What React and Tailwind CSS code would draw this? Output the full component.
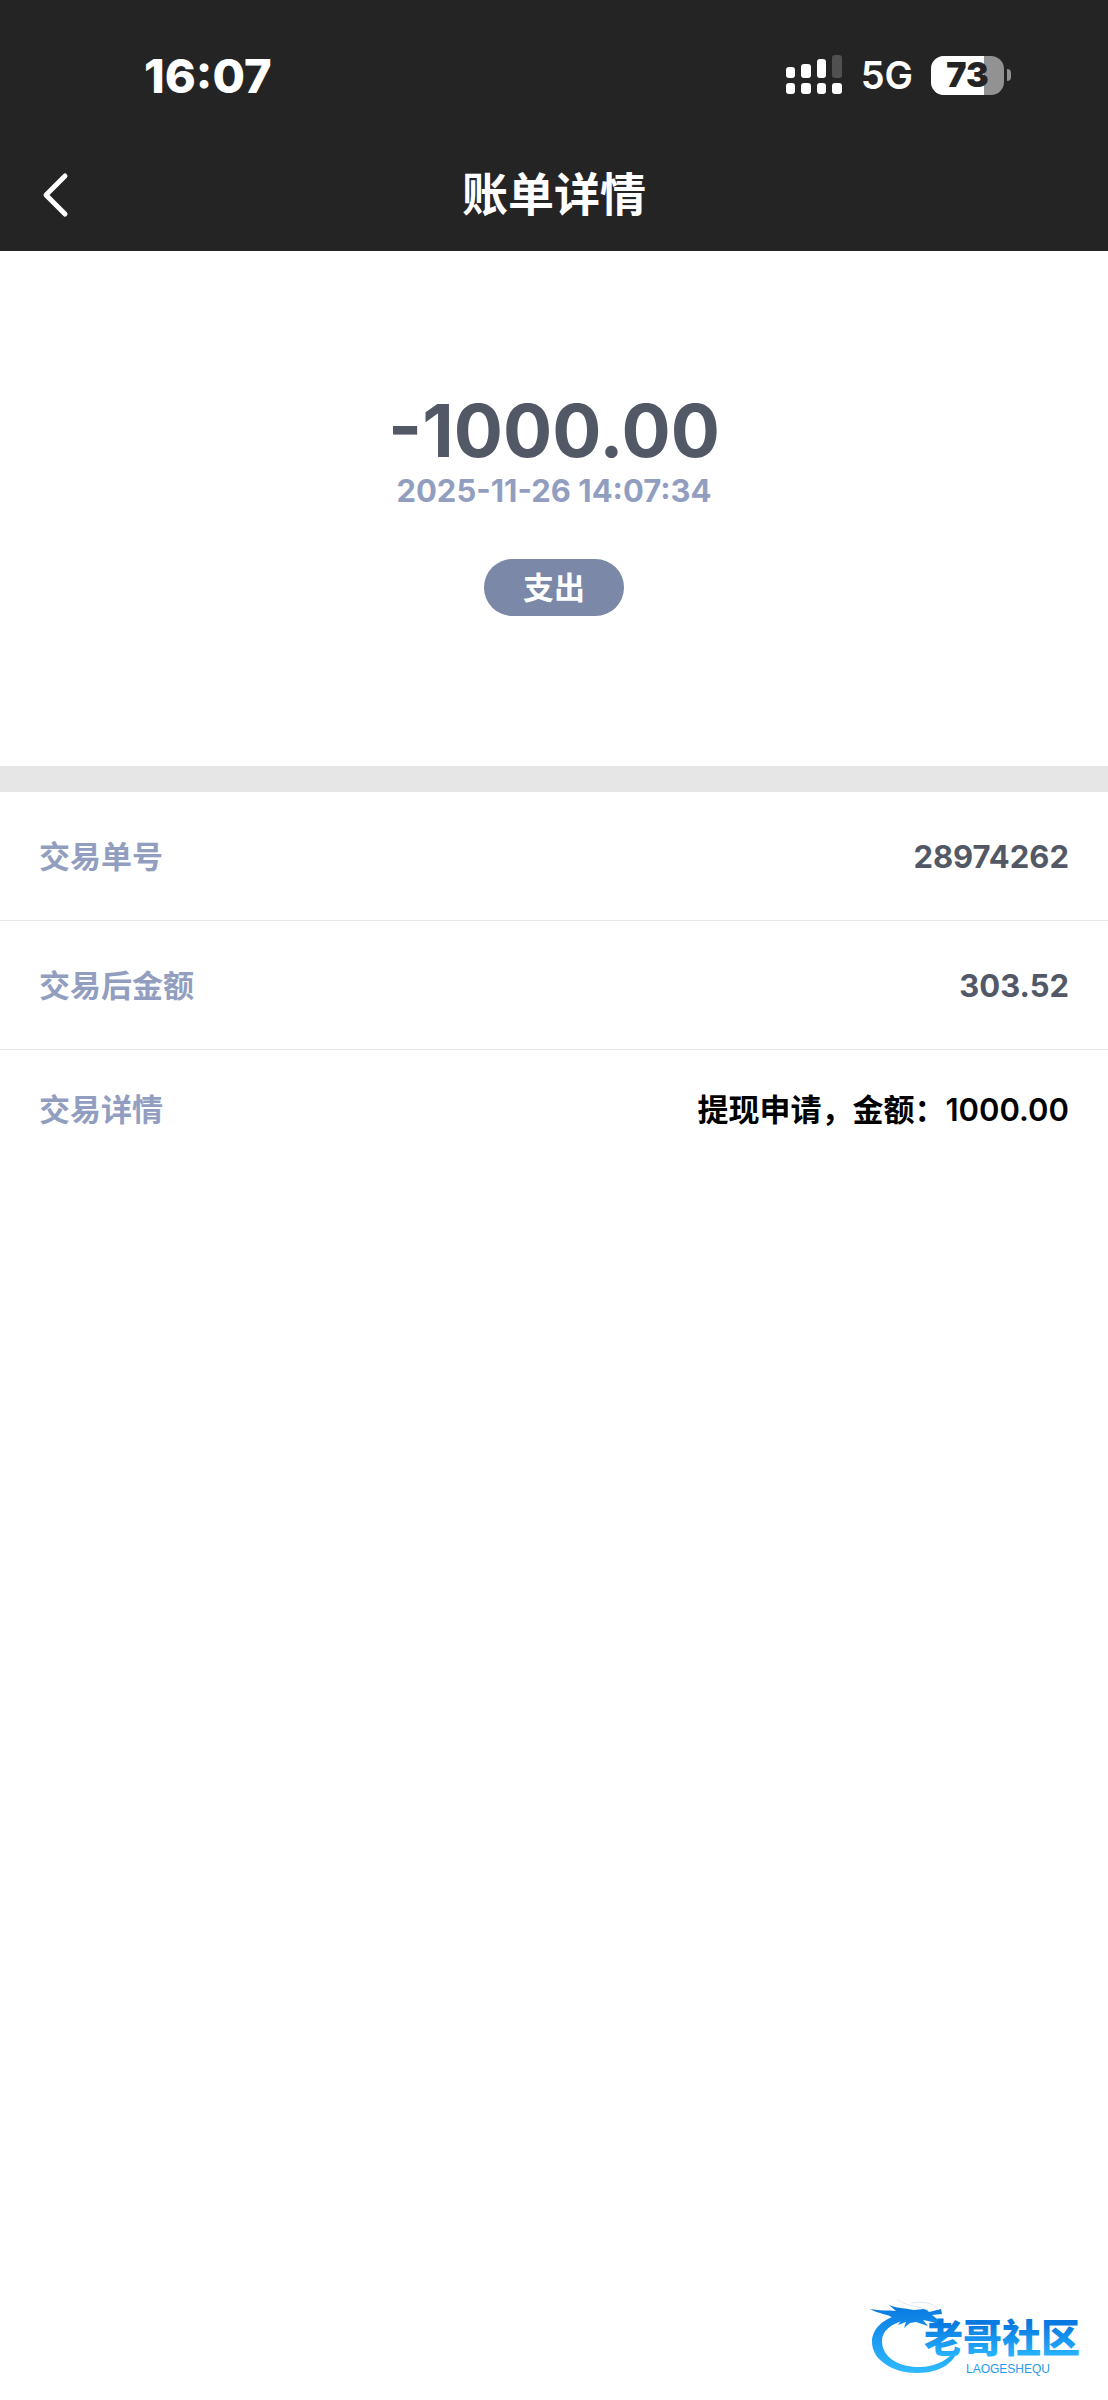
const detalhes = [
  { label: '交易单号', value: '28974262' },
  { label: '交易后金额', value: '303.52' },
]

function SignalIcon() {
  return (
    <svg width="58" height="40" viewBox="0 0 58 40" fill="#fff" aria-hidden="true">
      <rect x="1" y="12" width="9" height="11" rx="3" />
      <rect x="16" y="9" width="10" height="14" rx="3" />
      <rect x="32" y="4" width="9" height="19" rx="3" />
      <rect x="47" y="0" width="10" height="23" rx="3" fill="#505050" />
      <rect x="1" y="28" width="9" height="11" rx="3" />
      <rect x="16" y="28" width="10" height="11" rx="3" />
      <rect x="32" y="28" width="9" height="11" rx="3" />
      <rect x="47" y="28" width="10" height="11" rx="3" />
    </svg>
  )
}

function Battery({ level }) {
  return (
    <div className="flex items-center gap-[3px]">
      <div className="relative flex h-[39px] w-[73px] items-center justify-center overflow-hidden rounded-[13px] bg-[#929292]">
        <div className="absolute inset-y-0 left-0 bg-white" style={{ width: `${level}%` }} />
        <span className="relative text-[34px] leading-none font-black text-[#242424]">
          {level}
        </span>
      </div>
      <div className="h-3 w-1 rounded-r-full bg-[#929292]" />
    </div>
  )
}

function StatusBar() {
  return (
    <div className="flex h-[150px] items-center justify-between pr-[97px] pl-[144px]">
      <span className="text-[47px] leading-none font-extrabold">16:07</span>
      <div className="flex items-center gap-[18px]">
        <SignalIcon />
        <span className="text-[38px] leading-none font-semibold">5G</span>
        <Battery level={73} />
      </div>
    </div>
  )
}

function CommunityLogo() {
  return (
    <svg width="224" height="84" viewBox="0 0 224 84" role="img" aria-label="老哥社区">
      <defs>
        <linearGradient id="ring" gradientUnits="userSpaceOnUse" x1="0" y1="12" x2="0" y2="74">
          <stop offset="0" stopColor="#0a7be2" />
          <stop offset="1" stopColor="#2db8ff" />
        </linearGradient>
        <linearGradient id="word" gradientUnits="userSpaceOnUse" x1="0" y1="28" x2="0" y2="60">
          <stop offset="0" stopColor="#0879e0" />
          <stop offset="1" stopColor="#28b4ff" />
        </linearGradient>
      </defs>
      {/* dragon body */}
      <path
        d="M34 18C15 22 4 33 4 46C4 64 25 77 49 77C73 77 88 66 90 51C82 63 69 71 51 71C30 71 14 61 14 45C14 35 23 27 39 24Z"
        fill="url(#ring)"
      />
      {/* head, whiskers and horns */}
      <path
        d="M2 13C12 15 20 14 28 15L21 9C31 13 38 12 46 14C53 14 57 11 61 16L73 13L74 18L64 19L72 25L71 28L60 25L55 24L60 30L48 26L42 27L36 32L38 26L30 29L34 23L25 22C20 18 11 18 2 13Z"
        fill="url(#ring)"
      />
      <path
        d="M29 3C38 11 49 9 60 14M43 7C56 5 65 7 71 14"
        fill="none"
        stroke="#dfeaf2"
        strokeWidth="1"
      />
      <text
        x="56"
        y="56"
        fontSize="39"
        fontWeight="900"
        fill="url(#word)"
        className="font-['Noto_Sans_CJK_SC',sans-serif]"
      >
        老哥社区
      </text>
      <text
        x="98"
        y="77"
        fontSize="12"
        fill="#269cf0"
        className="font-['Liberation_Sans',sans-serif]"
      >
        LAOGESHEQU
      </text>
    </svg>
  )
}

export default function App() {
  return (
    <div className="flex min-h-screen flex-col bg-white font-['Inter','Noto_Sans_CJK_SC',sans-serif]">
      <header className="bg-[#242424] text-white">
        <StatusBar />
        <div className="grid h-[101px] grid-cols-3 items-start px-10">
          <button type="button" aria-label="返回" className="flex h-[90px] w-16 items-center">
            <svg width="32" height="46" viewBox="0 0 32 46" fill="none" aria-hidden="true">
              <path
                d="M25 4L6 23L25 42"
                stroke="#fff"
                strokeWidth="5"
                strokeLinecap="round"
                strokeLinejoin="round"
              />
            </svg>
          </button>
          <h1 className="text-center text-[46px] leading-[88px] font-bold">账单详情</h1>
        </div>
      </header>

      <main>
        <section className="flex flex-col items-center border-b-[26px] border-[#e6e6e6] pt-[144px] pb-[150px]">
          <p className="text-[73px] leading-[72px] font-bold text-[#525866]">-1000.00</p>
          <time dateTime="2025-11-26T14:07:34" className="text-[31px] leading-[48px] font-bold text-[#929ebf]">
            2025-11-26 14:07:34
          </time>
          <span className="mt-11 rounded-full bg-[#7b88a7] px-[39px] text-[31px] leading-[57px] font-bold text-white">
            支出
          </span>
        </section>

        <dl className="text-[31px]">
          {detalhes.map((item) => (
            <div
              key={item.label}
              className="flex h-[129px] items-center justify-between border-b border-[#e8e8e8] px-[39px] pt-0.5"
            >
              <dt className="font-bold text-[#929ebf]">{item.label}</dt>
              <dd className="font-bold text-[#525866]">{item.value}</dd>
            </div>
          ))}
          <div className="flex h-[120px] items-center justify-between px-[39px]">
            <dt className="font-bold text-[#929ebf]">交易详情</dt>
            <dd className="font-semibold text-black">提现申请，金额：1000.00</dd>
          </div>
        </dl>
      </main>

      <footer className="mt-auto flex justify-end pr-4 pb-5">
        <CommunityLogo />
      </footer>
    </div>
  )
}
